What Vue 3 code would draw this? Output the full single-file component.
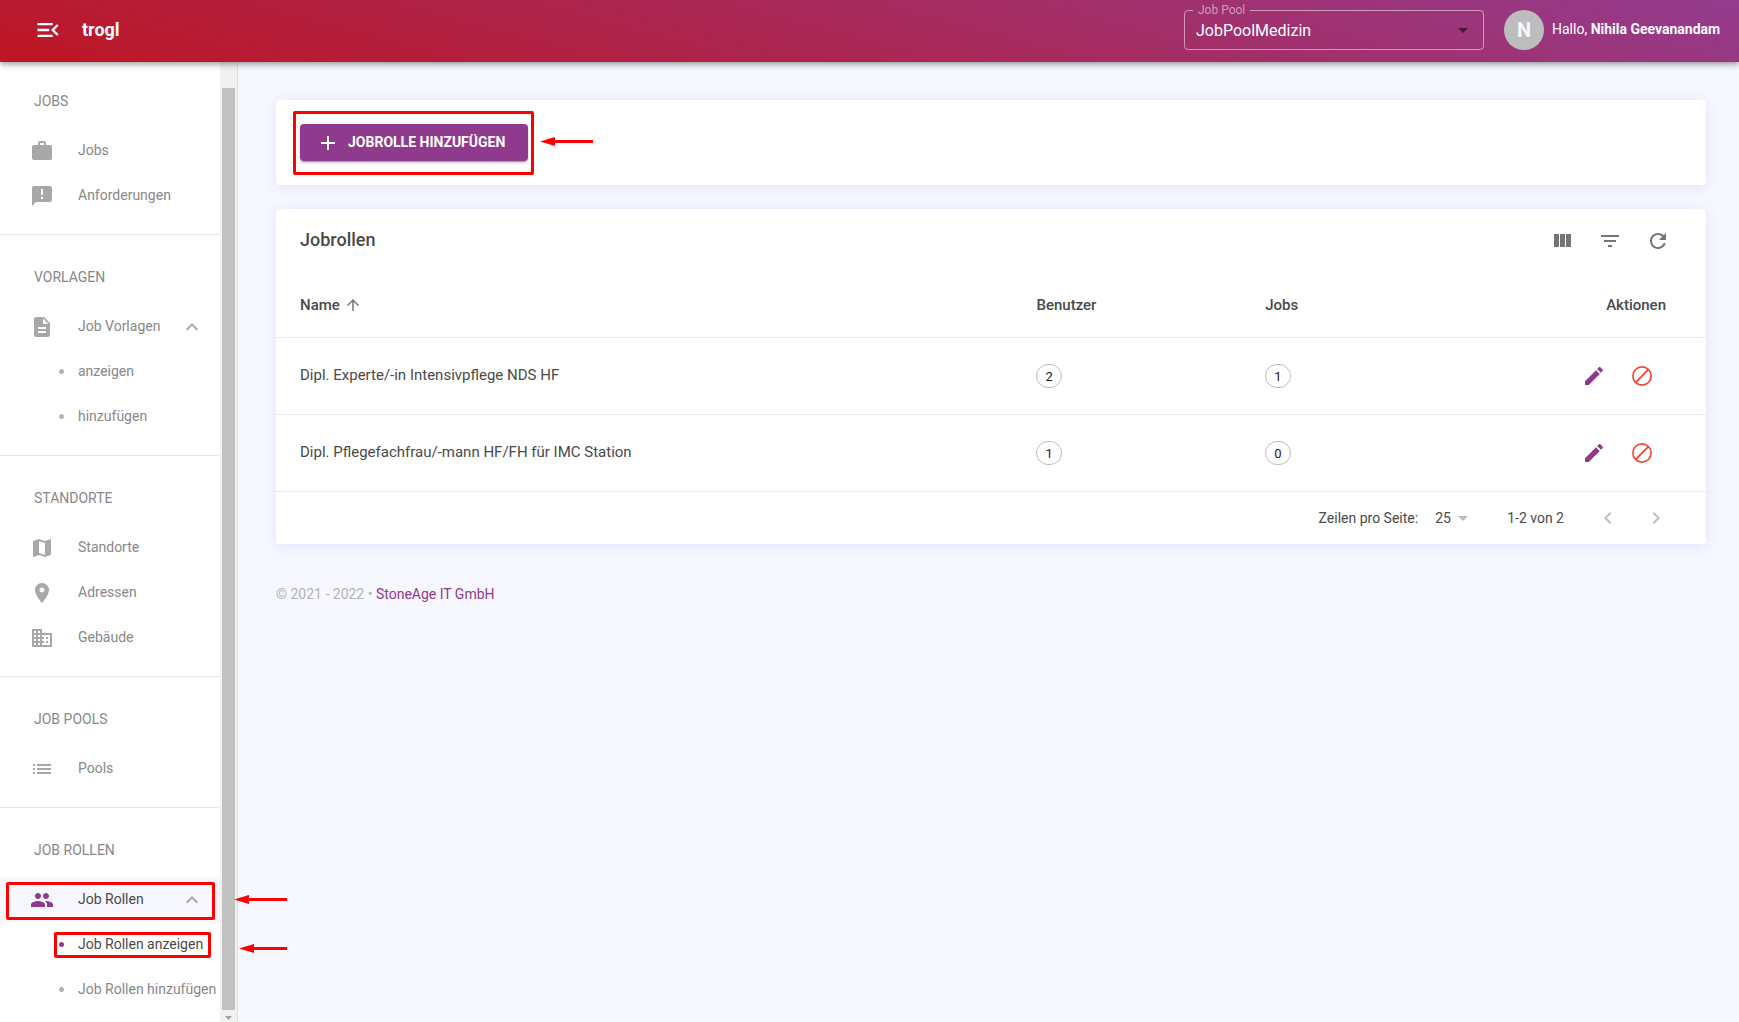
<script setup>
import { ref } from 'vue'

const icons = {
  menuOpen: 'M3 18h13v-2H3v2zM3 6v2h13V6H3zm0 7h10v-2H3v2zm18 2.59L17.42 12 21 8.41 19.59 7l-5 5 5 5L21 15.59z',
  work: 'M10 2h4a2 2 0 0 1 2 2v2h4a2 2 0 0 1 2 2v11a2 2 0 0 1-2 2H4a2 2 0 0 1-2-2V8a2 2 0 0 1 2-2h4V4a2 2 0 0 1 2-2zm4 4V4h-4v2h4z',
  feedback: 'M20 2H4c-1.1 0-1.99.9-1.99 2L2 22l4-4h14c1.1 0 2-.9 2-2V4c0-1.1-.9-2-2-2zm-7 13h-2v-2h2v2zm0-4h-2V5h2v6z',
  document: 'M14 2H6c-1.1 0-1.99.9-1.99 2L4 20c0 1.1.89 2 1.99 2H18c1.1 0 2-.9 2-2V8l-6-6zm2 16H8v-2h8v2zm0-4H8v-2h8v2zm-3-5V3.5L18.5 9H13z',
  map: 'M20.5 3l-.16.03L15 5.1 9 3 3.36 4.9c-.21.07-.36.25-.36.48V20.5c0 .28.22.5.5.5l.16-.03L9 18.9l6 2.1 5.64-1.9c.21-.07.36-.25.36-.48V3.5c0-.28-.22-.5-.5-.5zM15 19l-6-2.11V5l6 2.11V19z',
  place: 'M12 2C8.13 2 5 5.13 5 9c0 5.25 7 13 7 13s7-7.75 7-13c0-3.87-3.13-7-7-7zm0 9.5c-1.38 0-2.5-1.12-2.5-2.5s1.12-2.5 2.5-2.5 2.5 1.12 2.5 2.5-1.12 2.5-2.5 2.5z',
  building: 'M12 7V3H2v18h20V7H12zM6 19H4v-2h2v2zm0-4H4v-2h2v2zm0-4H4V9h2v2zm0-4H4V5h2v2zm4 12H8v-2h2v2zm0-4H8v-2h2v2zm0-4H8V9h2v2zm0-4H8V5h2v2zm10 12h-8v-2h2v-2h-2v-2h2v-2h-2V9h8v10zm-2-8h-2v2h2v-2zm0 4h-2v2h2v-2z',
  list: 'M3 13h2v-2H3v2zm0 4h2v-2H3v2zm0-8h2V7H3v2zm4 4h14v-2H7v2zm0 4h14v-2H7v2zM7 7v2h14V7H7z',
  group: 'M16 11c1.66 0 2.99-1.34 2.99-3S17.66 5 16 5s-3 1.34-3 3 1.34 3 3 3zm-8 0c1.66 0 2.99-1.34 2.99-3S9.66 5 8 5 5 6.34 5 8s1.34 3 3 3zm0 2c-2.33 0-7 1.17-7 3.5V19h14v-2.5c0-2.33-4.67-3.5-7-3.5zm8 0c-.29 0-.62.02-.97.05 1.16.84 1.97 1.97 1.97 3.45V19h6v-2.5c0-2.33-4.67-3.5-7-3.5z',
  expandLess: 'M12 8l-6 6 1.41 1.41L12 10.83l4.59 4.58L18 14z',
  add: 'M19 13h-6v6h-2v-6H5v-2h6V5h2v6h6v2z',
  columns: 'M10 18h5V5h-5v13zm-6 0h5V5H4v13zM16 5v13h5V5h-5z',
  filter: 'M10 18h4v-2h-4v2zM3 6v2h18V6H3zm3 7h12v-2H6v2z',
  refresh: 'M17.65 6.35C16.2 4.9 14.21 4 12 4c-4.42 0-7.99 3.58-7.99 8s3.57 8 7.99 8c3.73 0 6.84-2.55 7.73-6h-2.08c-.82 2.33-3.04 4-5.65 4-3.31 0-6-2.69-6-6s2.69-6 6-6c1.66 0 3.14.69 4.22 1.78L13 11h7V4l-2.35 2.35z',
  arrowUp: 'M4 12l1.41 1.41L11 7.83V20h2V7.83l5.58 5.59L20 12l-8-8-8 8z',
  edit: 'M3 17.25V21h3.75L17.81 9.94l-3.75-3.75L3 17.25zM20.71 7.04c.39-.39.39-1.02 0-1.41l-2.34-2.34c-.39-.39-1.02-.39-1.41 0l-1.83 1.83 3.75 3.75 1.83-1.83z',
  block: 'M12 2a10 10 0 1 0 0 20 10 10 0 0 0 0-20zm0 1.8a8.2 8.2 0 0 1 5.15 1.78L5.58 17.15A8.2 8.2 0 0 1 12 3.8zm0 16.4a8.2 8.2 0 0 1-5.15-1.78L18.42 6.85A8.2 8.2 0 0 1 12 20.2z',
  dropDown: 'M7 10l5 5 5-5z',
  left: 'M15.41 7.41L14 6l-6 6 6 6 1.41-1.41L10.83 12z',
  right: 'M10 6L8.59 7.41 13.17 12l-4.58 4.59L10 18l6-6z'
}

const sections = [
  { title: 'JOBS', items: [
    { label: 'Jobs', icon: 'work' },
    { label: 'Anforderungen', icon: 'feedback' }
  ] },
  { title: 'VORLAGEN', items: [
    { label: 'Job Vorlagen', icon: 'document', group: true },
    { label: 'anzeigen' },
    { label: 'hinzufügen' }
  ] },
  { title: 'STANDORTE', items: [
    { label: 'Standorte', icon: 'map' },
    { label: 'Adressen', icon: 'place' },
    { label: 'Gebäude', icon: 'building' }
  ] },
  { title: 'JOB POOLS', items: [
    { label: 'Pools', icon: 'list' }
  ] },
  { title: 'JOB ROLLEN', items: [
    { label: 'Job Rollen', icon: 'group', group: true, active: true, mark: 'mark-group' },
    { label: 'Job Rollen anzeigen', active: true, mark: 'mark-entry' },
    { label: 'Job Rollen hinzufügen' }
  ] }
]

const rows = [
  { name: 'Dipl. Experte/-in Intensivpflege NDS HF', users: 2, jobs: 1 },
  { name: 'Dipl. Pflegefachfrau/-mann HF/FH für IMC Station', users: 1, jobs: 0 }
]

const tools = [
  { label: 'Spalten anzeigen', icon: 'columns' },
  { label: 'Filter', icon: 'filter' },
  { label: 'Aktualisieren', icon: 'refresh' }
]

const pool = ref('JobPoolMedizin')
const pageSize = ref('25')
</script>

<template>
  <div class="app">
    <header class="topbar">
      <button class="menu-button" type="button" aria-label="Menü schliessen">
        <svg viewBox="0 0 24 24"><path :d="icons.menuOpen" /></svg>
      </button>
      <span class="brand">trogl</span>
      <fieldset class="pool">
        <legend><label for="pool">Job Pool</label></legend>
        <div class="pool-field">
          <select id="pool" v-model="pool">
            <option>JobPoolMedizin</option>
          </select>
          <svg class="pool-arrow" viewBox="0 0 24 24"><path :d="icons.dropDown" /></svg>
        </div>
      </fieldset>
      <span class="avatar">N</span>
      <span class="greeting">Hallo, <strong>Nihila Geevanandam</strong></span>
    </header>

    <div class="body">
      <aside class="sidebar">
        <nav class="nav">
          <section v-for="section in sections" :key="section.title" class="nav-section">
            <h2>{{ section.title }}</h2>
            <ul>
              <li v-for="item in section.items" :key="item.label">
                <component
                  :is="item.group ? 'button' : 'a'"
                  class="nav-item"
                  :class="{ active: item.active, group: item.group }"
                  :type="item.group ? 'button' : null"
                  :href="item.group ? null : '#'"
                  :aria-expanded="item.group ? 'true' : null"
                >
                  <span class="nav-lead">
                    <svg v-if="item.icon" class="icon" viewBox="0 0 24 24"><path :d="icons[item.icon]" /></svg>
                    <span v-else class="dot"></span>
                  </span>
                  <span class="nav-label">{{ item.label }}</span>
                  <svg v-if="item.group" class="chevron" viewBox="0 0 24 24"><path :d="icons.expandLess" /></svg>
                </component>
                <template v-if="item.mark">
                  <span class="mark" :class="item.mark"></span>
                  <svg class="pointer" :class="item.mark + '-pointer'" viewBox="0 0 53 9" preserveAspectRatio="xMinYMid slice">
                    <path d="M0 4.500L15 0V9z" /><path d="M13 3h40v3H13z" />
                  </svg>
                </template>
              </li>
            </ul>
          </section>
        </nav>
        <div class="scrollbar" aria-hidden="true">
          <div class="thumb"></div>
          <svg viewBox="0 0 17 12"><path d="M5 6h7l-3.500 4z" /></svg>
        </div>
      </aside>

      <main class="main">
        <section class="card actions">
          <div class="add-wrap">
            <button class="add" type="button">
              <svg viewBox="0 0 24 24"><path :d="icons.add" /></svg>
              <span>JOBROLLE HINZUFÜGEN</span>
            </button>
            <span class="mark mark-add"></span>
            <svg class="pointer mark-add-pointer" viewBox="0 0 53 9">
              <path d="M0 4.500L15 0V9z" /><path d="M13 3h40v3H13z" />
            </svg>
          </div>
        </section>

        <section class="card">
          <div class="toolbar">
            <h1>Jobrollen</h1>
            <button v-for="tool in tools" :key="tool.icon" class="icon-button" type="button" :aria-label="tool.label">
              <svg class="icon" viewBox="0 0 24 24"><path :d="icons[tool.icon]" /></svg>
            </button>
          </div>
          <table>
            <thead>
              <tr>
                <th class="col-name" aria-sort="ascending">
                  <span class="sort">Name <svg viewBox="0 0 24 24"><path :d="icons.arrowUp" /></svg></span>
                </th>
                <th class="col-count">Benutzer</th>
                <th class="col-count">Jobs</th>
                <th class="col-actions">Aktionen</th>
              </tr>
            </thead>
            <tbody>
              <tr v-for="row in rows" :key="row.name">
                <td class="cell-name">{{ row.name }}</td>
                <td><span class="chip">{{ row.users }}</span></td>
                <td><span class="chip">{{ row.jobs }}</span></td>
                <td>
                  <div class="row-actions">
                    <button class="icon-button edit" type="button" aria-label="Bearbeiten">
                      <svg class="icon" viewBox="0 0 24 24"><path :d="icons.edit" /></svg>
                    </button>
                    <button class="icon-button block" type="button" aria-label="Deaktivieren">
                      <svg class="icon" viewBox="0 0 24 24"><path :d="icons.block" /></svg>
                    </button>
                  </div>
                </td>
              </tr>
            </tbody>
          </table>
          <div class="pagination">
            <label for="page-size">Zeilen pro Seite:</label>
            <div class="page-size">
              <select id="page-size" v-model="pageSize">
                <option>25</option>
              </select>
              <svg viewBox="0 0 24 24"><path :d="icons.dropDown" /></svg>
            </div>
            <span class="range">1-2 von 2</span>
            <button class="icon-button pager" type="button" aria-label="Vorherige Seite" disabled>
              <svg class="icon" viewBox="0 0 24 24"><path :d="icons.left" /></svg>
            </button>
            <button class="icon-button pager" type="button" aria-label="Nächste Seite" disabled>
              <svg class="icon" viewBox="0 0 24 24"><path :d="icons.right" /></svg>
            </button>
          </div>
        </section>

        <footer>© 2021 - 2022 • <a href="#">StoneAge IT GmbH</a></footer>
      </main>
    </div>
  </div>
</template>

<style>
body {
  background: #f6f7ff;
}
</style>

<style scoped>
* {
  box-sizing: border-box;
}
.app {
  display: flex;
  flex-direction: column;
  min-height: 100vh;
  font-family: Roboto, "Liberation Sans", sans-serif;
  font-size: 14px;
  color: #4a4a4a;
}
button,
select {
  font: inherit;
  color: inherit;
  background: none;
  border: 0;
  padding: 0;
  margin: 0;
}
svg {
  display: block;
  fill: currentColor;
  flex: none;
}
a {
  text-decoration: none;
}
.icon {
  width: 24px;
  height: 24px;
}

/* top bar */
.topbar {
  position: relative;
  z-index: 2;
  display: flex;
  align-items: center;
  height: 62px;
  padding: 0 15px 2px 34px;
  color: #fff;
  background: linear-gradient(15deg, #be1522, #943c8f);
  box-shadow: 0 2px 4px -1px rgba(0, 0, 0, 0.2), 0 4px 5px rgba(0, 0, 0, 0.14), 0 1px 10px rgba(0, 0, 0, 0.12);
}
.menu-button svg {
  width: 28px;
  height: 28px;
}
.brand {
  margin-left: 20px;
  padding-bottom: 2px;
  font-size: 18px;
  font-weight: 700;
}
.pool {
  width: 300px;
  height: 46px;
  margin: 0 20px 6px auto;
  padding: 0 11px 0 8px;
  border: 1px solid rgba(255, 255, 255, 0.5);
  border-radius: 4px;
}
.pool legend {
  padding: 0 5px;
  font-size: 12px;
  line-height: 12px;
  color: rgba(255, 255, 255, 0.5);
}
.pool-field {
  position: relative;
  height: 28px;
}
.pool-field select {
  appearance: none;
  width: 100%;
  height: 28px;
  padding-left: 3px;
  font-size: 16px;
}
.pool-arrow {
  position: absolute;
  right: -3px;
  top: 2px;
  width: 24px;
  height: 24px;
  color: rgba(0, 0, 0, 0.54);
  pointer-events: none;
}
.avatar {
  display: flex;
  align-items: center;
  justify-content: center;
  width: 40px;
  height: 40px;
  margin-right: 8px;
  border-radius: 50%;
  background: #bdbdbd;
  color: #f6f7ff;
  font-size: 20px;
  font-weight: 700;
}
.greeting {
  min-width: 172px;
  padding-bottom: 2px;
}
.greeting strong {
  font-weight: 700;
}

/* side navigation */
.body {
  display: flex;
  flex: 1;
}
.sidebar {
  display: flex;
  flex: none;
  width: 238px;
  background: #fff;
  border-right: 1px solid #e0e0e0;
}
.nav {
  flex: 1;
  min-width: 0;
}
.nav-section {
  padding-bottom: 16px;
  border-bottom: 1px solid #e6e6e6;
}
.nav-section:last-child {
  padding-bottom: 0;
  border-bottom: 0;
}
.nav-section h2 {
  margin: 0;
  padding: 32px 34px 17px;
  font-size: 14px;
  font-weight: 400;
  line-height: 20px;
  color: #888;
}
.nav-section:first-child h2 {
  padding-top: 29px;
}
.nav ul {
  margin: 0;
  padding: 0;
  list-style: none;
}
.nav li {
  position: relative;
}
.nav-item {
  display: flex;
  align-items: center;
  width: 100%;
  height: 45px;
  padding-left: 30px;
  color: #888;
  white-space: nowrap;
  text-align: left;
}
.nav-lead {
  display: flex;
  width: 48px;
  color: #a8a8a8;
}
.nav-label {
  padding-bottom: 2px;
}
.dot {
  width: 5px;
  height: 5px;
  margin-left: 29px;
  border-radius: 50%;
  background: #b4b4b4;
}
.chevron {
  width: 24px;
  height: 24px;
  margin: 0 16px 0 auto;
  color: #a8a8a8;
}
.active {
  color: #4a4a4a;
}
.group.active {
  background: #f6f7ff;
}
.active .nav-lead {
  color: #8f3a8c;
}
.active .dot {
  background: #8f3a8c;
}
.scrollbar {
  display: flex;
  flex-direction: column;
  width: 17px;
  padding-top: 26px;
  background: #f1f1f1;
}
.thumb {
  flex: 1;
  margin: 0 2px;
  background: #c1c1c1;
}
.scrollbar svg {
  width: 17px;
  height: 12px;
  color: #a0a0a0;
}

/* red callouts lying over the interface */
.mark {
  position: absolute;
  border: 3px solid #f00;
  border-radius: 2px;
  pointer-events: none;
}
.pointer {
  position: absolute;
  z-index: 1;
  width: 53px;
  height: 9px;
  color: #f00;
}
.mark-group {
  inset: 5px 5px 2px 6px;
}
.mark-group-pointer {
  top: 18px;
  left: 234px;
}
.mark-entry {
  inset: 10px 9px 9px 54px;
}
.mark-entry-pointer {
  top: 22px;
  left: 239px;
  width: 48px;
}
.mark-add {
  inset: -13px -6px -14px -7px;
}
.mark-add-pointer {
  top: 13px;
  left: calc(100% + 12px);
}

/* content */
.main {
  flex: 1;
  min-width: 0;
  padding: 38px 33px 24px 38px;
}
.card {
  background: #fff;
  border-radius: 4px;
  box-shadow: 0 2px 14px rgba(90, 90, 200, 0.12);
}
.actions {
  display: flex;
  margin-bottom: 24px;
  padding: 24px;
}
.add-wrap {
  position: relative;
}
.add {
  display: flex;
  align-items: center;
  gap: 8px;
  min-width: 228px;
  height: 37px;
  padding: 0 16px;
  border-radius: 4px;
  background: #8f3a8c;
  color: #fff;
  font-weight: 700;
  box-shadow: 0 3px 1px -2px rgba(0, 0, 0, 0.2), 0 2px 2px rgba(0, 0, 0, 0.14), 0 1px 5px rgba(0, 0, 0, 0.12);
}
.add svg {
  width: 24px;
  height: 24px;
}
.add span {
  padding-bottom: 2px;
}
.toolbar {
  display: flex;
  align-items: center;
  height: 64px;
  padding: 0 24px;
}
.toolbar h1 {
  flex: 1;
  margin: 0;
  padding-bottom: 3px;
  font-size: 18px;
  font-weight: 500;
}
.icon-button {
  display: flex;
  align-items: center;
  justify-content: center;
  width: 48px;
  height: 48px;
  color: #757575;
}
.edit {
  color: #8f3a8c;
}
.block {
  color: #f44336;
}
table {
  width: 100%;
  table-layout: fixed;
  border-collapse: separate;
  border-spacing: 0;
}
th,
td {
  padding: 0 24px;
  border-bottom: 1px solid #ebebeb;
  text-align: left;
  font-size: 15px;
}
th {
  height: 65px;
  font-weight: 500;
}
td {
  height: 77px;
}
.cell-name {
  padding-bottom: 3px;
}
.col-name {
  width: 51.500%;
}
.col-count {
  width: 16%;
}
.col-actions {
  padding-right: 40px;
  text-align: right;
}
td:last-child {
  padding-right: 40px;
}
.sort {
  display: flex;
  align-items: center;
  gap: 4px;
}
.sort svg {
  width: 18px;
  height: 18px;
  color: #757575;
}
.chip {
  display: inline-flex;
  align-items: center;
  height: 24px;
  padding: 0 8px;
  border: 1px solid #bdbdbd;
  border-radius: 12px;
  color: #212121;
  font-size: 13px;
}
.row-actions {
  display: flex;
  justify-content: flex-end;
}
.pagination {
  display: flex;
  align-items: center;
  justify-content: flex-end;
  height: 52px;
  padding-right: 26px;
}
.page-size {
  position: relative;
  width: 40px;
  margin: 0 32px 0 17px;
}
.page-size select {
  appearance: none;
  width: 100%;
  height: 24px;
}
.page-size svg {
  position: absolute;
  right: 0;
  top: 0;
  width: 24px;
  height: 24px;
  color: #bdbdbd;
  pointer-events: none;
}
.range {
  margin-right: 20px;
}
.pager {
  color: #bdbdbd;
}
footer {
  margin-top: 40px;
  line-height: 20px;
  color: #b4b4b4;
}
footer a {
  color: #8f3a8c;
}
</style>
